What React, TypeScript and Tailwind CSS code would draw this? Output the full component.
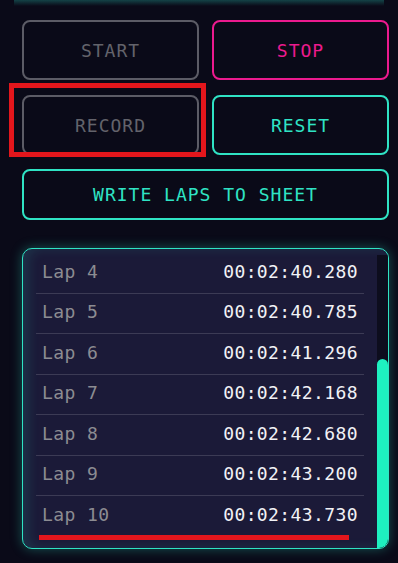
const laps = [
  { n: 4, t: '00:02:40.280' },
  { n: 5, t: '00:02:40.785' },
  { n: 6, t: '00:02:41.296' },
  { n: 7, t: '00:02:42.168' },
  { n: 8, t: '00:02:42.680' },
  { n: 9, t: '00:02:43.200' },
  { n: 10, t: '00:02:43.730' },
];

const mono = { fontFamily: '"DejaVu Sans Mono", "Liberation Mono", monospace' };

function Btn({ label, tone, h = 'h-[60px]' }: { label: string; tone: 'gray' | 'pink' | 'teal'; h?: string }) {
  const cls =
    tone === 'gray'
      ? 'border-[#5c5c66] text-[#63636b]'
      : tone === 'pink'
        ? 'border-[#ec1a8e] text-[#ec1a8e]'
        : 'border-[#2fe3c4] text-[#2fe3c4]';
  return (
    <button
      className={`${h} w-full rounded-[8px] border-2 bg-[#0a0a18] text-[18px] tracking-[1px] flex items-center justify-center ${cls}`}
      style={mono}
    >
      {label}
    </button>
  );
}

export default function App() {
  return (
    <div className="relative h-[563px] w-[398px] overflow-hidden bg-[#0a0a18]">
      <div className="mx-[14px] h-[6px] bg-gradient-to-b from-[#134246] to-transparent" />

      <div className="pl-[22px] pr-[9px] pt-[14px]">
        <div className="grid grid-cols-2 gap-x-[13px] gap-y-[15px]">
          <Btn label="START" tone="gray" />
          <Btn label="STOP" tone="pink" />
          <Btn label="RECORD" tone="gray" />
          <Btn label="RESET" tone="teal" />
        </div>
        <div className="mt-[14px]">
          <Btn label="WRITE LAPS TO SHEET" tone="teal" h="h-[51px]" />
        </div>

        <div className="mt-[28px] flex h-[301px] rounded-[10px] border-[1.5px] border-[#2fe3c4] bg-[#1b1a38] shadow-[0_0_12px_rgba(47,227,196,0.35),inset_6px_0_12px_rgba(47,227,196,0.12)] overflow-hidden">
          <div className="flex-1 pl-[13px] pr-[13px] pt-[4px]">
            {laps.map((l, i) => (
              <div
                key={l.n}
                className={`flex h-[40.5px] items-center justify-between px-[6px] pb-[3px] ${i < laps.length - 1 ? 'border-b border-[#3c3b55]' : ''}`}
                style={mono}
              >
                <span className="text-[18px] tracking-[0.4px] text-[#8c8c92]">Lap {l.n}</span>
                <span className="text-[18px] font-medium tracking-[0.4px] text-[#f2f2f6]">{l.t}</span>
              </div>
            ))}
          </div>
          <div className="mt-[6px] flex w-[11px] flex-col justify-end bg-[#0d0d1d]">
            <div className="h-[189px] rounded-t-full rounded-b-[4px] bg-[#1ef0c0]" />
          </div>
        </div>
      </div>

      <div className="pointer-events-none absolute left-[9px] top-[83px] h-[74px] w-[197px] border-[5px] border-[#e3161c]" />
      <div className="pointer-events-none absolute left-[39px] top-[535px] h-[5px] w-[310px] bg-[#e3161c]" />
    </div>
  );
}
